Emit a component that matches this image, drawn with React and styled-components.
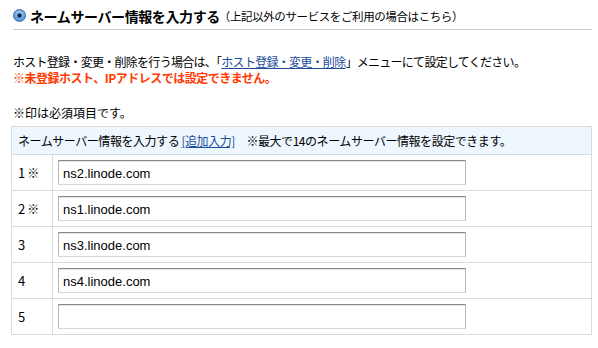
import React from "react";
import styled, { createGlobalStyle } from "styled-components";

const GlobalStyle = createGlobalStyle`
  html, body {
    margin: 0;
    padding: 0;
    background: #fff;
  }
  body {
    font-family: "Noto Sans CJK JP", "Liberation Sans", sans-serif;
    color: #000;
  }
`;

const Page = styled.div`
  width: 598px;
  height: 348px;
  padding: 0 6px 0 11px;
  box-sizing: border-box;
  overflow: hidden;
`;

const TitleRow = styled.div`
  display: flex;
  align-items: center;
  gap: 4px;
  height: 30px;
  margin-left: 2px;
  border-bottom: 1px solid #c8c8c8;
  box-sizing: border-box;
  padding-top: 2px;
`;

const Title = styled.span`
  font-size: 14px;
  font-weight: bold;
  letter-spacing: -0.4px;
`;

const TitleNote = styled.span`
  font-size: 11.5px;
  font-weight: normal;
  letter-spacing: -0.4px;
  margin-left: -5px;
`;

const Lead = styled.div`
  margin: 24px 0 0 2px;
  font-size: 12px;
  line-height: 16px;
  letter-spacing: -0.72px;
`;

const Link = styled.a`
  color: #1b4d9c;
  text-decoration: underline;
`;

const Warn = styled.div`
  color: #ff3a00;
  font-weight: bold;
  letter-spacing: -0.5px;
`;

const Required = styled.div`
  margin: 19px 0 0 2px;
  font-size: 12px;
  line-height: 16px;
`;

const Table = styled.table`
  margin-top: 5px;
  width: 581px;
  border-collapse: collapse;
  font-size: 12px;
  border: 1px solid #dadada;
`;

const HeadCell = styled.th`
  height: 27px;
  padding: 0 0 0 6px;
  text-align: left;
  font-weight: normal;
  background: #eef6fe;
  border-bottom: 1px solid #dadada;
  letter-spacing: -0.45px;
`;

const Row = styled.tr`
  height: 36px;
  border-bottom: 1px solid #dadada;
`;

const NumCell = styled.td`
  width: 34px;
  padding: 0 0 0 6px;
  border-right: 1px solid #dadada;
  font-size: 13px;
`;

const FieldCell = styled.td`
  padding: 0 0 0 5px;
`;

const Input = styled.input`
  display: block;
  width: 408px;
  height: 25px;
  box-sizing: border-box;
  padding: 1px 4px 0;
  font-family: "Liberation Sans", Arial, sans-serif;
  font-size: 13px;
  color: #000;
  background: #fff;
  border-top: 1px solid #8a8a8a;
  border-left: 1px solid #b8b8b8;
  border-right: 1px solid #b8b8b8;
  border-bottom: 1px solid #d8d8d8;
  box-shadow: inset 0 1px 0 #e4e4e4;
  outline: none;
`;

const Mark = styled.span`
  margin-left: 2px;
  font-size: 12px;
`;

function RadioIcon() {
  return (
    <svg width="13" height="13" viewBox="0 0 13 13">
      <defs>
        <radialGradient id="rg" cx="50%" cy="40%" r="60%">
          <stop offset="0%" stopColor="#bfe0ff" />
          <stop offset="100%" stopColor="#3d86d8" />
        </radialGradient>
      </defs>
      <circle cx="6.5" cy="6.5" r="6" fill="url(#rg)" stroke="#4a6f9e" strokeWidth="1" />
      <circle cx="6.5" cy="6.5" r="2.3" fill="#0d2a55" />
    </svg>
  );
}

const servers = [
  { n: "1", req: true, v: "ns2.linode.com" },
  { n: "2", req: true, v: "ns1.linode.com" },
  { n: "3", req: false, v: "ns3.linode.com" },
  { n: "4", req: false, v: "ns4.linode.com" },
  { n: "5", req: false, v: "" },
];

export default function App() {
  return (
    <>
      <GlobalStyle />
      <Page>
        <TitleRow>
          <RadioIcon />
          <Title>ネームサーバー情報を入力する</Title>
          <TitleNote>（上記以外のサービスをご利用の場合はこちら）</TitleNote>
        </TitleRow>
        <Lead>
          ホスト登録・変更・削除を行う場合は、「<Link href="#">ホスト登録・変更・削除</Link>」メニューにて設定してください。
          <Warn>※未登録ホスト、IPアドレスでは設定できません。</Warn>
        </Lead>
        <Required>※印は必須項目です。</Required>
        <Table>
          <thead>
            <tr>
              <HeadCell colSpan={2}>
                ネームサーバー情報を入力する <Link href="#">[追加入力]</Link>　※最大で14のネームサーバー情報を設定できます。
              </HeadCell>
            </tr>
          </thead>
          <tbody>
            {servers.map((s) => (
              <Row key={s.n}>
                <NumCell>
                  {s.n}
                  {s.req && <Mark>※</Mark>}
                </NumCell>
                <FieldCell>
                  <Input type="text" defaultValue={s.v} />
                </FieldCell>
              </Row>
            ))}
          </tbody>
        </Table>
      </Page>
    </>
  );
}
